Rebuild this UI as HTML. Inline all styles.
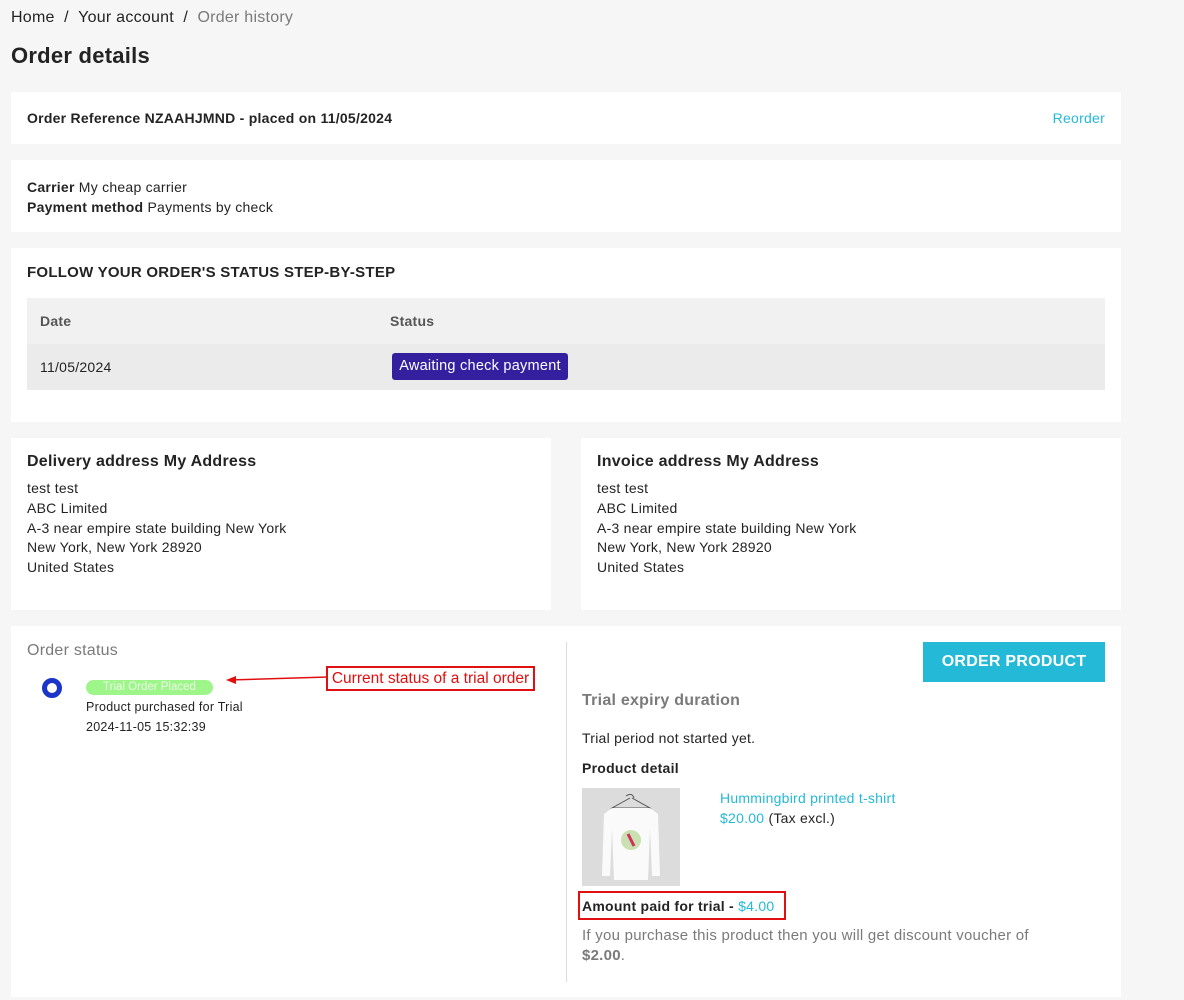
<!DOCTYPE html>
<html><head><meta charset="utf-8"><style>
*{box-sizing:border-box;margin:0;padding:0}
body{width:1184px;height:1000px;background:#f6f6f6;font-family:"Liberation Sans",sans-serif;color:#232323;font-size:14px;position:relative;overflow:hidden;letter-spacing:0.25px}
.a{position:absolute}
.card{position:absolute;background:#fff}
b{font-weight:bold}
.blue{color:#24b9d7}
</style></head><body>
<div class="a" style="left:11px;top:9px;font-size:16px;color:#232323">Home&nbsp;&nbsp;/&nbsp;&nbsp;Your account&nbsp;&nbsp;/&nbsp;&nbsp;<span style="color:#7a7a7a">Order history</span></div>
<div class="a" style="left:11px;top:43px;font-size:22px;font-weight:bold">Order details</div>

<div class="card" style="left:11px;top:92px;width:1110px;height:52px">
<div class="a" style="left:16px;top:18px;font-weight:bold">Order Reference NZAAHJMND - placed on 11/05/2024</div>
<div class="a blue" style="right:16px;top:18px">Reorder</div></div>

<div class="card" style="left:11px;top:160px;width:1110px;height:72px">
<div class="a" style="left:16px;top:17px;line-height:20px"><b>Carrier</b> My cheap carrier<br><b>Payment method</b> Payments by check</div></div>

<div class="card" style="left:11px;top:248px;width:1110px;height:174px">
<div class="a" style="left:16px;top:16px;font-weight:bold;font-size:15px">FOLLOW YOUR ORDER'S STATUS STEP-BY-STEP</div>
<div class="a" style="left:16px;top:50px;width:1078px;height:46px;background:#f1f1f1"></div>
<div class="a" style="left:16px;top:96px;width:1078px;height:46px;background:#ebebeb"></div>
<div class="a" style="left:29px;top:65px;color:#555;font-weight:bold">Date</div>
<div class="a" style="left:379px;top:65px;color:#555;font-weight:bold">Status</div>
<div class="a" style="left:29px;top:111px">11/05/2024</div>
<div class="a" style="left:381px;top:105px;width:176px;height:27px;padding-top:5px;background:#34209e;color:#fff;border-radius:3px;font-size:14.5px;text-align:center">Awaiting check payment</div></div>

<div class="card" style="left:11px;top:438px;width:540px;height:172px">
<div class="a" style="left:16px;top:15px;font-weight:bold;font-size:16px">Delivery address My Address</div>
<div class="a" style="left:16px;top:41px;line-height:19.8px">test test<br>ABC Limited<br>A-3 near empire state building New York<br>New York, New York 28920<br>United States</div></div>
<div class="card" style="left:581px;top:438px;width:540px;height:172px">
<div class="a" style="left:16px;top:15px;font-weight:bold;font-size:16px">Invoice address My Address</div>
<div class="a" style="left:16px;top:41px;line-height:19.8px">test test<br>ABC Limited<br>A-3 near empire state building New York<br>New York, New York 28920<br>United States</div></div>

<div class="card" style="left:11px;top:626px;width:1110px;height:371px">
<div class="a" style="left:16px;top:16px;font-size:16px;color:#7a7a7a">Order status</div>
<div class="a" style="left:31px;top:52px;width:20px;height:20px;border:5px solid #1c35c9;border-radius:50%"></div>
<div class="a" style="left:75px;top:54px;width:127px;height:15px;background:#9ef58a;border-radius:8px;color:#e9ffe4;font-size:11.5px;text-align:center;line-height:15px;letter-spacing:0">Trial Order Placed</div>
<div class="a" style="left:75px;top:74px;font-size:12.5px">Product purchased for Trial</div>
<div class="a" style="left:75px;top:94px;font-size:12.5px">2024-11-05 15:32:39</div>
<svg class="a" style="left:212px;top:44px" width="120" height="20"><line x1="6" y1="10" x2="105" y2="7" stroke="#e01010" stroke-width="1.5"/><path d="M3 10 L13 6 L13 14Z" fill="#e01010"/></svg>
<div class="a" style="left:315px;top:40px;width:209px;height:25px;border:2px solid #e01010;color:#e01010;font-size:15.5px;line-height:21px;text-align:center;letter-spacing:0">Current status of a trial order</div>
<div class="a" style="left:555px;top:16px;width:1px;height:340px;background:#ddd"></div>
<div class="a" style="left:912px;top:16px;width:182px;height:40px;background:#24b9d7;color:#fff;font-size:16px;font-weight:bold;text-align:center;line-height:40px">ORDER PRODUCT</div>
<div class="a" style="left:571px;top:66px;font-size:16px;color:#7a7a7a;font-weight:bold">Trial expiry duration</div>
<div class="a" style="left:571px;top:104px">Trial period not started yet.</div>
<div class="a" style="left:571px;top:134px;font-weight:bold">Product detail</div>
<div class="a" style="left:571px;top:162px;width:98px;height:98px;background:#dcdcdc">
<svg width="98" height="98"><path d="M44 8 q6 -4 8 2 M48 10 L30 20 L68 20 L50 10" stroke="#555" fill="none"/><path d="M30 20 L22 26 L20 88 L28 88 L30 40 L32 92 L66 92 L68 40 L70 88 L78 88 L76 26 L68 20Z" fill="#fafafa"/><circle cx="49" cy="52" r="10" fill="#c9e0b0"/><path d="M46 46 L52 58" stroke="#d0305a" stroke-width="3"/></svg></div>
<div class="a blue" style="left:709px;top:164px">Hummingbird printed t-shirt</div>
<div class="a" style="left:709px;top:184px"><span class="blue">$20.00</span> (Tax excl.)</div>
<div class="a" style="left:567px;top:265px;width:208px;height:29px;border:2px solid #e01010"></div>
<div class="a" style="left:571px;top:272px;font-weight:bold">Amount paid for trial - <span class="blue" style="font-weight:normal">$4.00</span></div>
<div class="a" style="left:571px;top:300px;width:490px;color:#7a7a7a;font-size:15px;line-height:20px">If you purchase this product then you will get discount voucher of <b>$2.00</b>.</div>
</div>
</body></html>
